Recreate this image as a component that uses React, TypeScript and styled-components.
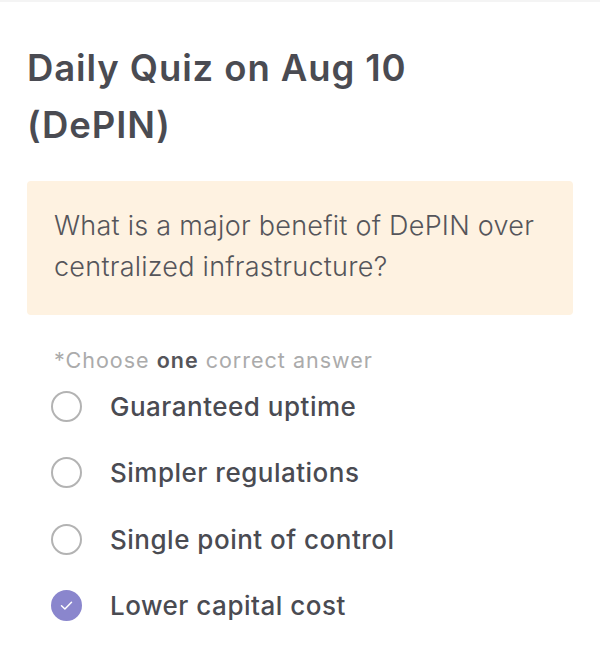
import React from "react"
import styled, { createGlobalStyle } from "styled-components"

const GlobalStyle = createGlobalStyle`
  body {
    margin: 0;
    background: #ffffff;
    font-family: "Inter", "Noto Sans", sans-serif;
  }
`

const Page = styled.div`
  border-top: 2px solid #f4f4f4;
  padding: 38px 27px 0 27px;
  width: 600px;
  box-sizing: border-box;
`

const Title = styled.h1`
  color: #4a4b52;
  font-family: "Inter", sans-serif;
  font-size: 36.5px;
  font-weight: 600;
  letter-spacing: 0.9px;
  line-height: 57px;
  margin: 0;
`

const QuestionBox = styled.div`
  background: #fef2e1;
  border-radius: 4px;
  margin-top: 27px;
  padding: 24px 27px 28px 27px;
`

const QuestionText = styled.p`
  color: #55555a;
  font-family: "Inter", sans-serif;
  font-size: 27px;
  font-weight: 300;
  letter-spacing: 0.25px;
  line-height: 41px;
  margin: 0;
`

const Hint = styled.p`
  color: #ababab;
  font-family: "Inter", sans-serif;
  font-size: 21.5px;
  font-weight: 400;
  letter-spacing: 1px;
  margin: 32px 0 0 27px;

  b {
    color: #55555a;
    font-weight: 600;
  }
`

const Options = styled.div`
  display: flex;
  flex-direction: column;
  gap: 32.5px;
  margin: 16px 0 0 24px;
`

const Option = styled.label`
  align-items: center;
  display: flex;
  gap: 28px;
  height: 34px;
`

interface RadioProps {
  checked: boolean
}

const Radio = styled.span<RadioProps>`
  align-items: center;
  background: ${(p): string => (p.checked ? "#8a86cd" : "#ffffff")};
  border: 2px solid ${(p): string => (p.checked ? "#8a86cd" : "#b3b3b3")};
  border-radius: 50%;
  box-sizing: border-box;
  display: flex;
  height: 31px;
  justify-content: center;
  width: 31px;
`

const OptionText = styled.span`
  color: #4a4b52;
  font-family: "Inter", sans-serif;
  font-size: 26px;
  font-weight: 500;
  letter-spacing: 0.5px;
`

const answers = [
  { text: "Guaranteed uptime", checked: false },
  { text: "Simpler regulations", checked: false },
  { text: "Single point of control", checked: false },
  { text: "Lower capital cost", checked: true },
]

const App: React.FC = () => (
  <>
    <GlobalStyle />
    <Page>
      <Title>
        Daily Quiz on Aug 10
        <br />
        (DePIN)
      </Title>
      <QuestionBox>
        <QuestionText>
          What is a major benefit of DePIN over centralized infrastructure?
        </QuestionText>
      </QuestionBox>
      <Hint>
        *Choose <b>one</b> correct answer
      </Hint>
      <Options>
        {answers.map(a => (
          <Option key={a.text}>
            <Radio checked={a.checked}>
              {a.checked && (
                <svg width="17" height="17" viewBox="0 0 17 17">
                  <path
                    d="M3.5 8.8 L6.9 12 L13.5 5.2"
                    fill="none"
                    stroke="#ffffff"
                    strokeWidth="1.5"
                    strokeLinecap="round"
                    strokeLinejoin="round"
                  />
                </svg>
              )}
            </Radio>
            <OptionText>{a.text}</OptionText>
          </Option>
        ))}
      </Options>
    </Page>
  </>
)

export default App
